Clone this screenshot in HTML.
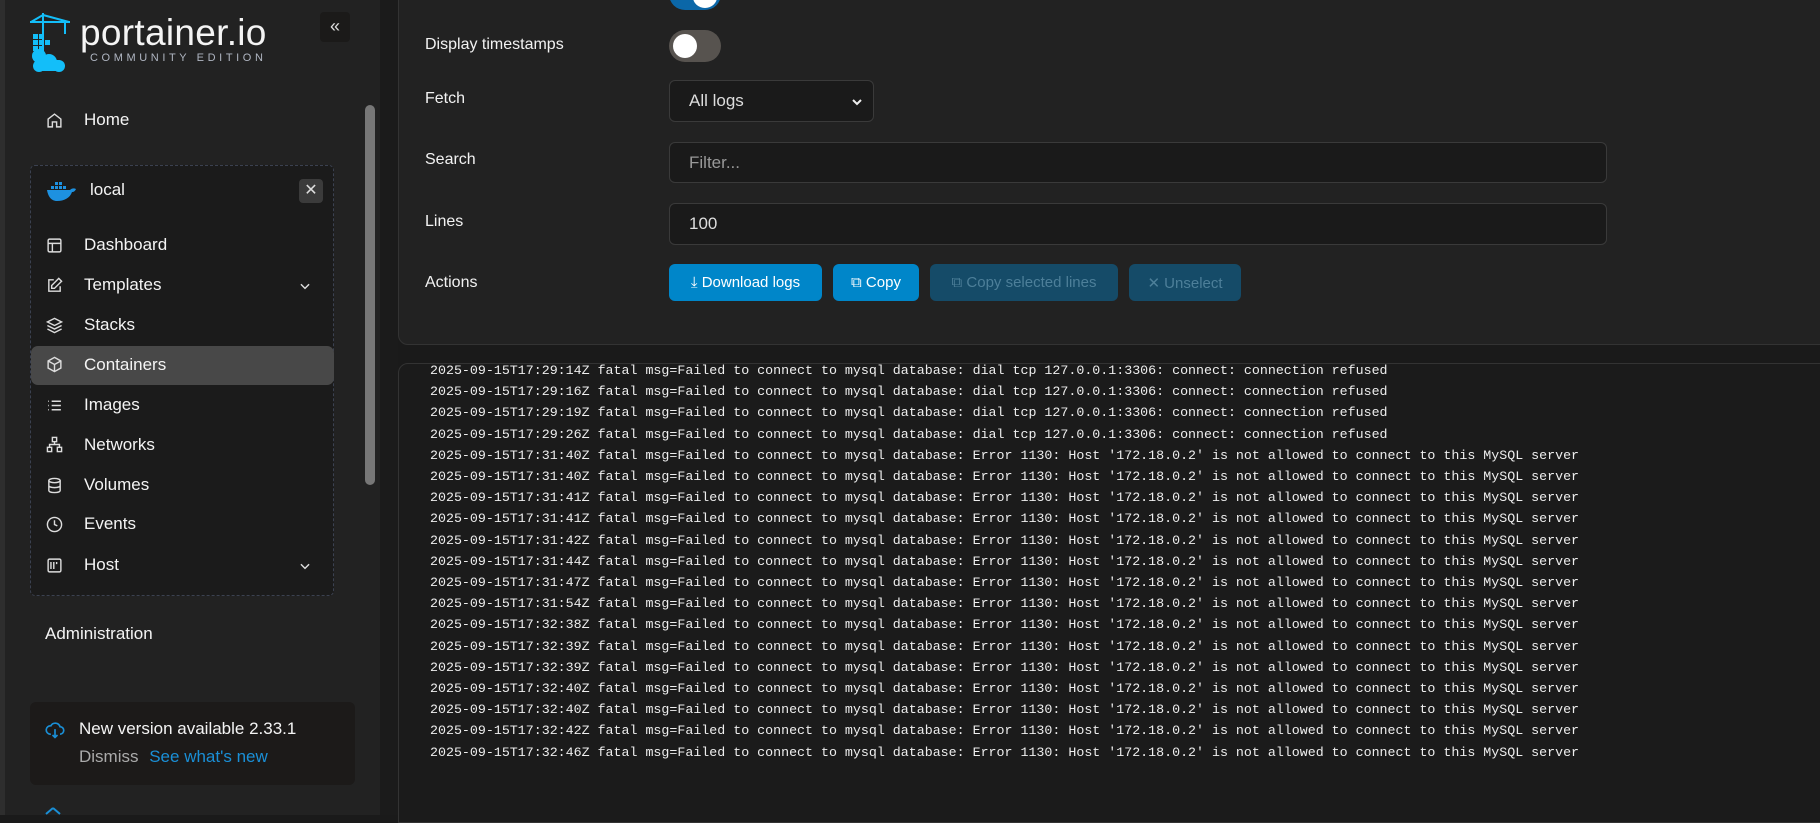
<!DOCTYPE html>
<html><head><meta charset="utf-8"><style>
*{box-sizing:border-box;margin:0;padding:0}
body{width:1820px;height:815px;overflow:hidden;background:#1a1a1a;font-family:"Liberation Sans",sans-serif;color:#fff;position:relative}
.abs{position:absolute}
#side{left:0;top:0;width:380px;height:815px;background:#222;border-left:5px solid #2e2e2e}
#gap{left:380px;top:0;width:18px;height:815px;background:#1b1b1b}
.nav{position:absolute;left:84px;font-size:17px;color:#f4f4f4;line-height:20px}
.ico{position:absolute;left:46px;width:17px;height:17px}
#env{left:30px;top:165px;width:304px;height:431px;border:1px dashed #3b4150;border-radius:5px;background:#1b1b1b}
#main{left:398px;top:-10px;width:1430px;height:355px;background:#222;border:1px solid #333;border-radius:0 0 0 10px}
.lbl{position:absolute;left:425px;font-size:16px;color:#f2f2f2}
.inp{position:absolute;left:669px;background:#1a1a1a;border:1px solid #3a3a3a;border-radius:6px;font-size:17px;color:#ddd;padding-left:19px;display:flex;align-items:center}
.btn{position:absolute;top:264px;height:37px;border-radius:6px;font-size:15px;display:flex;align-items:center;justify-content:center;gap:6px}
#log{left:398px;top:363px;width:1430px;height:460px;background:#1b1b1b;border:1px solid #333;border-radius:10px 0 0 0;overflow:hidden}
#log pre{font-family:"Liberation Mono",monospace;font-size:13.3px;line-height:21.2px;color:#eee;position:absolute;left:31px;top:-4px}
.chev{position:absolute;left:298px;width:14px;height:14px}
</style></head><body>
<div id="side" class="abs"></div>
<div id="gap" class="abs"></div>
<svg class="abs" style="left:29px;top:12px" width="44" height="60" viewBox="0 0 44 60">
<g stroke="#13bef9" stroke-width="2" fill="none"><path d="M14 1v38M1 10h40M14 3l-12 7M14 3l26 7M36 10v12"/></g>
<g fill="#13bef9"><rect x="4" y="22" width="5" height="5"/><rect x="10" y="22" width="5" height="5"/><rect x="4" y="28" width="5" height="5"/><rect x="10" y="28" width="5" height="5"/><rect x="16" y="28" width="5" height="5"/><rect x="4" y="34" width="5" height="5"/><rect x="10" y="34" width="5" height="5"/>
<circle cx="10" cy="44" r="7"/><circle cx="20" cy="50" r="8"/><circle cx="10" cy="54" r="6"/><circle cx="30" cy="54" r="6"/><rect x="6" y="48" width="28" height="11" rx="5"/></g></svg>
<div class="abs" style="left:80px;top:13px;font-size:37px;color:#f4f4f4;letter-spacing:.3px;line-height:40px">portainer.io</div>
<div class="abs" style="left:90px;top:52px;font-size:11px;color:#b0b6c2;letter-spacing:3.6px">COMMUNITY EDITION</div>
<div class="abs" style="left:320px;top:12px;width:30px;height:30px;background:#1b1a19;border-radius:4px;color:#ddd;font-size:18px;text-align:center;line-height:28px">«</div>
<div class="abs" style="left:365px;top:105px;width:10px;height:380px;background:#777;border-radius:5px"></div>
<svg class="ico" style="top:112px" viewBox="0 0 24 24" fill="none" stroke="#ddd" stroke-width="2"><path d="M3 10l9-7 9 7v11h-6v-7h-6v7H3z"/></svg>
<div class="nav" style="top:110px">Home</div>
<div id="env" class="abs"></div>
<svg class="abs" style="left:47px;top:180px" width="29" height="22" viewBox="0 0 29 22"><g fill="#1d91e0"><rect x="8" y="2" width="3" height="3"/><rect x="12" y="2" width="3" height="3"/><rect x="4" y="6" width="3" height="3"/><rect x="8" y="6" width="3" height="3"/><rect x="12" y="6" width="3" height="3"/><rect x="16" y="6" width="3" height="3"/><path d="M0 10h23c2-2 4-2 6-1-1 2-2 3-4 3-2 6-8 9-15 9C4 21 1 16 0 10z"/></g></svg>
<div class="nav" style="left:90px;top:180px">local</div>
<div class="abs" style="left:299px;top:179px;width:24px;height:24px;background:#3b3b3b;border-radius:4px;color:#ddd;text-align:center;line-height:23px;font-size:16px">✕</div>
<div class="abs" style="left:31px;top:346px;width:303px;height:39px;background:#484848;border-radius:7px"></div>
<svg class="ico" style="top:237px" viewBox="0 0 24 24" fill="none" stroke="#ddd" stroke-width="2"><rect x="3" y="3" width="18" height="18" rx="2"/><path d="M3 9h18M9 9v12"/></svg>
<div class="nav" style="top:235px">Dashboard</div>
<svg class="ico" style="top:277px" viewBox="0 0 24 24" fill="none" stroke="#ddd" stroke-width="2"><path d="M11 4H4v16h16v-7"/><path d="M18 2l4 4-10 10H8v-4z"/></svg>
<div class="nav" style="top:275px">Templates</div>
<svg class="chev" style="top:279px" viewBox="0 0 24 24" fill="none" stroke="#ddd" stroke-width="2.5"><path d="M5 9l7 7 7-7"/></svg>
<svg class="ico" style="top:317px" viewBox="0 0 24 24" fill="none" stroke="#ddd" stroke-width="2"><path d="M12 2l10 5-10 5-10-5z M2 12l10 5 10-5 M2 17l10 5 10-5"/></svg>
<div class="nav" style="top:315px">Stacks</div>
<svg class="ico" style="top:356px" viewBox="0 0 24 24" fill="none" stroke="#ddd" stroke-width="2"><path d="M12 2l9 5v10l-9 5-9-5V7z M3 7l9 5 9-5 M12 12v10"/></svg>
<div class="nav" style="top:355px">Containers</div>
<svg class="ico" style="top:397px" viewBox="0 0 24 24" fill="none" stroke="#ddd" stroke-width="2"><path d="M8 6h13M8 12h13M8 18h13M3 6h1M3 12h1M3 18h1"/></svg>
<div class="nav" style="top:395px">Images</div>
<svg class="ico" style="top:436px" viewBox="0 0 24 24" fill="none" stroke="#ddd" stroke-width="2"><rect x="9" y="2" width="6" height="6"/><rect x="2" y="16" width="6" height="6"/><rect x="16" y="16" width="6" height="6"/><path d="M12 8v4M5 16v-4h14v4"/></svg>
<div class="nav" style="top:435px">Networks</div>
<svg class="ico" style="top:477px" viewBox="0 0 24 24" fill="none" stroke="#ddd" stroke-width="2"><ellipse cx="12" cy="5" rx="8" ry="3"/><path d="M4 5v14c0 2 4 3 8 3s8-1 8-3V5M4 12c0 2 4 3 8 3s8-1 8-3"/></svg>
<div class="nav" style="top:475px">Volumes</div>
<svg class="ico" style="top:516px" viewBox="0 0 24 24" fill="none" stroke="#ddd" stroke-width="2"><circle cx="12" cy="12" r="10"/><path d="M12 6v6l4 2"/></svg>
<div class="nav" style="top:514px">Events</div>
<svg class="ico" style="top:557px" viewBox="0 0 24 24" fill="none" stroke="#ddd" stroke-width="2"><rect x="3" y="3" width="18" height="18" rx="2"/><path d="M7 7v10M11 7v10M15 7v3"/></svg>
<div class="nav" style="top:555px">Host</div>
<svg class="chev" style="top:559px" viewBox="0 0 24 24" fill="none" stroke="#ddd" stroke-width="2.5"><path d="M5 9l7 7 7-7"/></svg>
<div class="nav" style="left:45px;top:624px">Administration</div>
<div class="abs" style="left:30px;top:702px;width:325px;height:83px;background:#1c1a19;border-radius:6px"></div>
<svg class="abs" style="left:45px;top:720px" width="20" height="20" viewBox="0 0 24 24" fill="none" stroke="#1a8fd6" stroke-width="2"><path d="M7 17H6a5 5 0 1 1 1-10 6 6 0 0 1 11 1 4 4 0 0 1 0 9M12 11v10m-3-3 3 3 3-3"/></svg>
<div class="abs" style="left:79px;top:719px;font-size:17px;color:#f4f4f4">New version available 2.33.1</div>
<div class="abs" style="left:79px;top:747px;font-size:17px;color:#aaa">Dismiss <span style="color:#1a8fd6;margin-left:6px">See what's new</span></div>
<svg class="abs" style="left:44px;top:807px" width="18" height="10" viewBox="0 0 18 10"><path d="M9 1l7 6M9 1L2 7" stroke="#1a8fd6" stroke-width="2" fill="none"/></svg>

<div id="main" class="abs"></div>
<div class="abs" style="left:669px;top:-12px;width:52px;height:22px;background:#0b67a8;border-radius:0 0 16px 16px"></div>
<div class="abs" style="left:693px;top:-14px;width:24px;height:22px;background:#fff;border-radius:50%"></div>
<div class="lbl" style="top:36px">Display timestamps</div>
<div class="abs" style="left:669px;top:30px;width:52px;height:32px;background:#57534f;border-radius:16px"></div>
<div class="abs" style="left:673px;top:34px;width:24px;height:24px;background:#fff;border-radius:50%"></div>
<div class="lbl" style="top:90px">Fetch</div>
<div class="inp" style="top:80px;width:205px;height:42px">All logs<svg style="position:absolute;right:10px;top:15px" width="12" height="12" viewBox="0 0 24 24" fill="none" stroke="#eee" stroke-width="4"><path d="M4 8l8 8 8-8"/></svg></div>
<div class="lbl" style="top:151px">Search</div>
<div class="inp" style="top:142px;width:938px;height:41px;color:#999">Filter...</div>
<div class="lbl" style="top:213px">Lines</div>
<div class="inp" style="top:203px;width:938px;height:42px">100</div>
<div class="lbl" style="top:274px">Actions</div>
<div class="btn" style="left:669px;width:153px;background:#0086c9;color:#fff">⤓ Download logs</div>
<div class="btn" style="left:833px;width:86px;background:#0086c9;color:#fff">⧉ Copy</div>
<div class="btn" style="left:930px;width:188px;background:#154b68;color:#4d7f99">⧉ Copy selected lines</div>
<div class="btn" style="left:1129px;width:112px;background:#154b68;color:#4d7f99">✕ Unselect</div>

<div id="log" class="abs"><pre>2025-09-15T17:29:14Z fatal msg=Failed to connect to mysql database: dial tcp 127.0.0.1:3306: connect: connection refused
2025-09-15T17:29:16Z fatal msg=Failed to connect to mysql database: dial tcp 127.0.0.1:3306: connect: connection refused
2025-09-15T17:29:19Z fatal msg=Failed to connect to mysql database: dial tcp 127.0.0.1:3306: connect: connection refused
2025-09-15T17:29:26Z fatal msg=Failed to connect to mysql database: dial tcp 127.0.0.1:3306: connect: connection refused
2025-09-15T17:31:40Z fatal msg=Failed to connect to mysql database: Error 1130: Host '172.18.0.2' is not allowed to connect to this MySQL server
2025-09-15T17:31:40Z fatal msg=Failed to connect to mysql database: Error 1130: Host '172.18.0.2' is not allowed to connect to this MySQL server
2025-09-15T17:31:41Z fatal msg=Failed to connect to mysql database: Error 1130: Host '172.18.0.2' is not allowed to connect to this MySQL server
2025-09-15T17:31:41Z fatal msg=Failed to connect to mysql database: Error 1130: Host '172.18.0.2' is not allowed to connect to this MySQL server
2025-09-15T17:31:42Z fatal msg=Failed to connect to mysql database: Error 1130: Host '172.18.0.2' is not allowed to connect to this MySQL server
2025-09-15T17:31:44Z fatal msg=Failed to connect to mysql database: Error 1130: Host '172.18.0.2' is not allowed to connect to this MySQL server
2025-09-15T17:31:47Z fatal msg=Failed to connect to mysql database: Error 1130: Host '172.18.0.2' is not allowed to connect to this MySQL server
2025-09-15T17:31:54Z fatal msg=Failed to connect to mysql database: Error 1130: Host '172.18.0.2' is not allowed to connect to this MySQL server
2025-09-15T17:32:38Z fatal msg=Failed to connect to mysql database: Error 1130: Host '172.18.0.2' is not allowed to connect to this MySQL server
2025-09-15T17:32:39Z fatal msg=Failed to connect to mysql database: Error 1130: Host '172.18.0.2' is not allowed to connect to this MySQL server
2025-09-15T17:32:39Z fatal msg=Failed to connect to mysql database: Error 1130: Host '172.18.0.2' is not allowed to connect to this MySQL server
2025-09-15T17:32:40Z fatal msg=Failed to connect to mysql database: Error 1130: Host '172.18.0.2' is not allowed to connect to this MySQL server
2025-09-15T17:32:40Z fatal msg=Failed to connect to mysql database: Error 1130: Host '172.18.0.2' is not allowed to connect to this MySQL server
2025-09-15T17:32:42Z fatal msg=Failed to connect to mysql database: Error 1130: Host '172.18.0.2' is not allowed to connect to this MySQL server
2025-09-15T17:32:46Z fatal msg=Failed to connect to mysql database: Error 1130: Host '172.18.0.2' is not allowed to connect to this MySQL server</pre></div>
</body></html>
